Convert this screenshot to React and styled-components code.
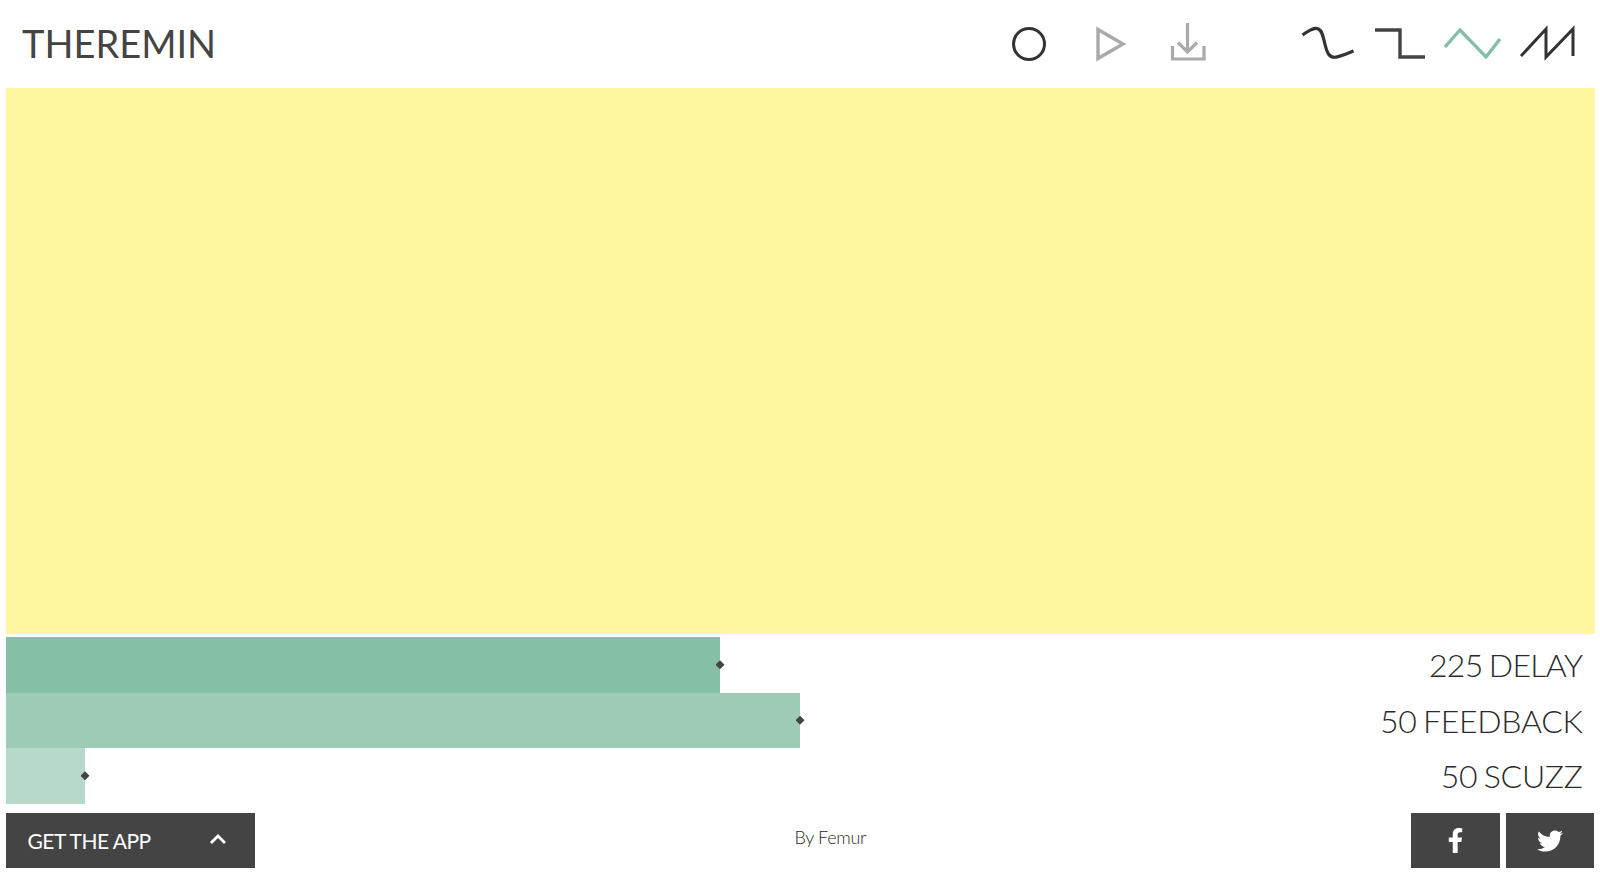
import React from "react";
import styled, { createGlobalStyle } from "styled-components";
import { FaFacebookF, FaTwitter } from "react-icons/fa";

const Global = createGlobalStyle`
  html, body { margin: 0; padding: 0; background: #fff; }
  body { font-family: Lato, "Open Sans", sans-serif; color: #444; }
  * { box-sizing: border-box; }
`;

const Page = styled.div`
  width: 1600px;
  height: 876px;
  padding: 0 5.5px 0 5.5px;
  display: flex;
  flex-direction: column;
  overflow: hidden;
`;

const Header = styled.header`
  height: 88px;
  display: flex;
  align-items: center;
  padding: 0 17.5px 0 16.5px;
`;

const Title = styled.h1`
  margin: 0 auto 2px 0;
  font-size: 38px;
  font-weight: 400;
  letter-spacing: 0;
  color: #444;
`;

const IconGroup = styled.div`
  display: flex;
  gap: ${(p) => p.$gap}px;
  margin-left: ${(p) => p.$offset || 0}px;
`;

const IconSvg = styled.svg`
  display: block;
  width: ${(p) => p.$w}px;
  height: 44px;
  fill: none;
  stroke: ${(p) => p.$color};
  stroke-width: ${(p) => p.$sw || 3};
`;

const Pad = styled.div`
  height: 546px;
  background: #fff8a0;
  flex: none;
`;

const Sliders = styled.section`
  margin-top: 3px;
  display: flex;
  flex-direction: column;
`;

const SliderRow = styled.div`
  height: 55.5px;
  display: flex;
  align-items: center;
  justify-content: space-between;
`;

const Fill = styled.div`
  position: relative;
  height: 100%;
  background: ${(p) => p.$color};
`;

const Thumb = styled.span`
  position: absolute;
  right: -4.5px;
  top: 50%;
  width: 9px;
  height: 9px;
  margin-top: -4.5px;
  background: #444;
  clip-path: polygon(50% 0, 100% 50%, 50% 100%, 0 50%);
`;

const SliderLabel = styled.div`
  font-size: 32px;
  font-weight: 300;
  color: #2a2a2a;
  padding-right: 12px;
  letter-spacing: ${(p) => p.$spacing}px;
  word-spacing: -2px;
  white-space: nowrap;
`;

const Footer = styled.footer`
  margin-top: 9.5px;
  height: 55px;
  display: flex;
  align-items: stretch;
  justify-content: space-between;
`;

const AppButton = styled.button`
  width: 249.5px;
  border: 0;
  margin: 0;
  padding: 0 28px 0 22px;
  background: #444;
  color: #fff;
  font-family: Lato, sans-serif;
  font-size: 21px;
  font-weight: 400;
  letter-spacing: -0.5px;
  word-spacing: 0;
  display: flex;
  align-items: center;
  justify-content: space-between;
`;

const ChevronIcon = styled.svg`
  display: block;
  margin-top: -3px;
  fill: none;
  stroke: #fff;
  stroke-width: 2.8;
`;

const Credit = styled.div`
  font-size: 18px;
  font-weight: 300;
  color: #2a2a2a;
  letter-spacing: -0.3px;
  padding-top: 13px;
  margin-left: -6px;
`;

const Social = styled.div`
  display: flex;
  gap: 6px;
`;

const SocialButton = styled.a`
  width: 88.5px;
  background: #444;
  color: #fff;
  display: flex;
  align-items: center;
  justify-content: center;
  font-size: ${(p) => p.$size}px;
`;

const sliders = [
  { label: "225 DELAY", width: 714.5, color: "#85bfa6", spacing: -0.65 },
  { label: "50 FEEDBACK", width: 794.5, color: "#9ecbb5", spacing: -0.3 },
  { label: "50 SCUZZ", width: 79.5, color: "#b6d9ca", spacing: -0.3 },
];

export default function App() {
  return (
    <Page>
      <Global />
      <Header>
        <Title>THEREMIN</Title>
        <IconGroup $gap={40}>
          <IconSvg $w={40} $color="#333" viewBox="0 0 40 44">
            <circle cx="20" cy="22" r="15.5" />
          </IconSvg>
          <IconSvg $w={40} $color="#aaa" $sw={3.4} viewBox="0 0 40 44">
            <polygon points="9,7.5 9,36.5 34,22" />
          </IconSvg>
          <IconSvg $w={40} $color="#aaa" $sw={3.2} viewBox="0 0 40 44">
            <path d="M18.5 1 V30 M9 20.5 L18.5 30 L28 20.5 M3.5 24 V37 H35 V24" />
          </IconSvg>
        </IconGroup>
        <IconGroup $gap={13.7} $offset={87}>
          <IconSvg $w={60} $color="#333" $sw={3.2} viewBox="0 0 60 44">
            <path d="M6.5 13 C13.5 8 18.5 5 22.5 7 C28.5 10 27.5 24 32.5 32 C36.5 38 42.5 35 57.5 29" />
          </IconSvg>
          <IconSvg $w={60} $color="#444" $sw={3.4} viewBox="0 0 60 44">
            <path d="M5 8 H30 V35 H55" />
          </IconSvg>
          <IconSvg $w={60} $color="#85bfa6" $sw={3.4} viewBox="0 0 60 44">
            <path d="M2 25 L17 8 L43 35 L57 17" />
          </IconSvg>
          <IconSvg $w={60} $color="#333" viewBox="0 0 60 44">
            <path d="M4 34 L29 7 V35 L56 7 V34" />
          </IconSvg>
        </IconGroup>
      </Header>
      <Pad />
      <Sliders>
        {sliders.map((s) => (
          <SliderRow key={s.label}>
            <Fill $color={s.color} style={{ width: s.width }}>
              <Thumb />
            </Fill>
            <SliderLabel $spacing={s.spacing}>{s.label}</SliderLabel>
          </SliderRow>
        ))}
      </Sliders>
      <Footer>
        <AppButton>
          GET THE APP
          <ChevronIcon width="18" height="12" viewBox="0 0 18 12">
            <path d="M2 10 L9 3 L16 10" />
          </ChevronIcon>
        </AppButton>
        <Credit>By Femur</Credit>
        <Social>
          <SocialButton $size={25}><FaFacebookF /></SocialButton>
          <SocialButton $size={26}><FaTwitter /></SocialButton>
        </Social>
      </Footer>
    </Page>
  );
}
